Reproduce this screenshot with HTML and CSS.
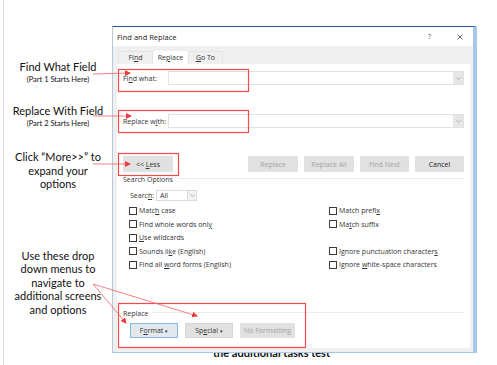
FILE: index.html
```html
<!DOCTYPE html>
<html lang="en">
<head>
    <meta charset="UTF-8">
    <meta name="viewport" content="width=device-width, initial-scale=1.0">
    <title>Find and Replace</title>
    <link rel="stylesheet" href="styles.css">
</head>
<body>
<div class="page">
    <div class="notes">
        <div class="note note-find">
            <div class="note-title">Find What Field</div>
            <div class="note-sub">(Part 1 Starts Here)</div>
        </div>
        <div class="note note-replace">
            <div class="note-title">Replace With Field</div>
            <div class="note-sub">(Part 2 Starts Here)</div>
        </div>
        <div class="note note-more">Click “More&gt;&gt;” to<br>expand your<br>options</div>
        <div class="note note-menus">Use these drop<br>down menus to<br>navigate to<br>additional screens<br>and options</div>
    </div>

    <div class="stage">
        <div class="dialog">
            <div class="titlebar">
                <span class="title">Find and Replace</span>
                <span class="help">?</span>
                <svg class="close" width="6" height="6" viewBox="0 0 6 6">
                    <path d="M0.5 0.5 L5.5 5.5 M5.5 0.5 L0.5 5.5" stroke="#555" stroke-width="0.9"/>
                </svg>
            </div>
            <div class="frame">
                <div class="tabs">
                    <div class="tab">Fi<u>n</u>d</div>
                    <div class="tab active">Re<u>p</u>lace</div>
                    <div class="tab"><u>G</u>o To</div>
                </div>
                <div class="panel">
                    <div class="field-row first">
                        <span class="field-label">Fi<u>n</u>d what:</span>
                        <div class="combo">
                            <span class="combo-btn">
                                <svg width="5" height="3" viewBox="0 0 5 3"><path d="M0.3 0.4 L2.5 2.5 L4.7 0.4" fill="none" stroke="#999" stroke-width="0.7"/></svg>
                            </span>
                        </div>
                    </div>
                    <div class="field-row second">
                        <span class="field-label">Replace w<u>i</u>th:</span>
                        <div class="combo">
                            <span class="combo-btn">
                                <svg width="5" height="3" viewBox="0 0 5 3"><path d="M0.3 0.4 L2.5 2.5 L4.7 0.4" fill="none" stroke="#999" stroke-width="0.7"/></svg>
                            </span>
                        </div>
                    </div>

                    <div class="actions">
                        <button class="btn btn-less">&lt;&lt; <u>L</u>ess</button>
                        <div class="btn-group">
                            <button class="btn btn-off">Replace</button>
                            <button class="btn btn-off">Replace All</button>
                            <button class="btn btn-off btn-narrow">Find Next</button>
                            <button class="btn btn-cancel btn-narrow">Cancel</button>
                        </div>
                    </div>

                    <div class="section section-search">
                        <span>Search Options</span>
                        <span class="section-line"></span>
                    </div>

                    <div class="search-row">
                        <span class="search-label">Searc<u>h</u>:</span>
                        <div class="select">
                            <span class="select-value">All</span>
                            <span class="select-btn">
                                <svg width="5" height="3" viewBox="0 0 5 3"><path d="M0.3 0.4 L2.5 2.5 L4.7 0.4" fill="none" stroke="#999" stroke-width="0.7"/></svg>
                            </span>
                        </div>
                    </div>

                    <div class="checks">
                        <div class="check"><span class="box"></span><span>Matc<u>h</u> case</span></div>
                        <div class="check"><span class="box"></span><span>Match prefi<u>x</u></span></div>
                        <div class="check"><span class="box"></span><span>Find whole words onl<u>y</u></span></div>
                        <div class="check"><span class="box"></span><span>Ma<u>t</u>ch suffix</span></div>
                        <div class="check"><span class="box"></span><span><u>U</u>se wildcards</span></div>
                        <div class="check"></div>
                        <div class="check"><span class="box"></span><span>Sounds li<u>k</u>e (English)</span></div>
                        <div class="check"><span class="box"></span><span>Ignore punctuation character<u>s</u></span></div>
                        <div class="check"><span class="box"></span><span>Find all <u>w</u>ord forms (English)</span></div>
                        <div class="check"><span class="box"></span><span>Ignore <u>w</u>hite-space characters</span></div>
                    </div>

                    <div class="section section-replace">
                        <span>Replace</span>
                        <span class="section-line"></span>
                    </div>

                    <div class="format-row">
                        <button class="fbtn fbtn-focus">F<u>o</u>rmat <span class="caret">▾</span></button>
                        <button class="fbtn">Sp<u>e</u>cial <span class="caret">▾</span></button>
                        <button class="fbtn fbtn-off">No Formatting</button>
                    </div>
                </div>
            </div>
        </div>
        <div class="doc-line"><span>the additional tasks test</span></div>
    </div>
</div>

<svg class="marks" width="497" height="365" viewBox="0 0 497 365">
    <defs>
        <marker id="head" markerWidth="6" markerHeight="6" refX="5" refY="3" orient="auto" markerUnits="userSpaceOnUse">
            <path d="M0 0 L6 3 L0 6 Z" fill="#ee3b3b"/>
        </marker>
    </defs>
    <g fill="none" stroke="#f04a4a" stroke-width="1.2">
        <rect x="118.5" y="69.5" width="130" height="22"/>
        <rect x="118.5" y="110.5" width="130" height="22"/>
        <rect x="118.5" y="153.5" width="60" height="22"/>
        <rect x="118.5" y="303.5" width="187" height="44"/>
    </g>
    <g stroke="#f06060" stroke-width="0.8" marker-end="url(#head)">
        <line x1="93" y1="74" x2="130" y2="73"/>
        <line x1="93" y1="116" x2="131" y2="116"/>
        <line x1="93" y1="164" x2="130" y2="164"/>
        <line x1="93" y1="284" x2="126" y2="323"/>
        <line x1="93" y1="284" x2="197" y2="316"/>
    </g>
</svg>
</body>
</html>
```

FILE: styles.css
```css
* {
    margin: 0;
    padding: 0;
    box-sizing: border-box;
}

body {
    width: 497px;
    height: 365px;
    overflow: hidden;
    position: relative;
    background: #fff;
    font-family: "Open Sans", sans-serif;
}

u {
    text-decoration: underline;
    text-underline-offset: 1px;
}

.page {
    display: flex;
    align-items: flex-start;
    height: 365px;
    padding-left: 3px;
}

/* annotations on the left */

.notes {
    width: 109px;
    height: 365px;
    border-left: 1px solid #dedede;
    font-family: Lato, sans-serif;
    font-size: 11px;
    line-height: 13.5px;
    color: #111;
    text-align: center;
}

.note-title {
    line-height: 13px;
}

.note-sub {
    font-size: 7.5px;
    line-height: 11px;
    margin-top: 1px;
}

.note-find {
    margin-top: 60px;
}

.note-replace {
    margin-top: 19px;
}

.note-more {
    margin-top: 21px;
}

.note-menus {
    margin-top: 58px;
}

/* dialog */

.stage {
    width: 365px;
    padding-top: 26px;
}

.dialog {
    height: 327px;
    display: flex;
    flex-direction: column;
    background: #f0f0f0;
    border-top: 1px solid #2b5797;
    border-left: 1px solid #b9c8d8;
    border-right: 4px solid #a6c8e6;
    border-bottom: 1px solid #a6c8e6;
}

.titlebar {
    height: 19px;
    display: flex;
    align-items: center;
    padding-left: 4px;
    padding-right: 10px;
    background: #fff;
    font-size: 7.5px;
    color: #222;
}

.help {
    margin-left: auto;
    margin-right: 26px;
    font-size: 7px;
    color: #555;
}

.frame {
    flex: 1;
    display: flex;
    flex-direction: column;
    padding: 0 3px 4px 4px;
}

.tabs {
    height: 18px;
    display: flex;
    align-items: flex-end;
    padding-left: 1px;
}

.tab {
    width: 35px;
    height: 13px;
    border: 1px solid #e4e4e4;
    border-bottom: none;
    font-size: 7px;
    line-height: 12px;
    text-align: center;
    color: #333;
}

.tab.active {
    background: #fff;
    border-color: #fff;
}

.panel {
    height: 284px;
    display: flex;
    flex-direction: column;
    background: #fff;
}

.field-row {
    height: 14px;
    display: flex;
    align-items: center;
    padding: 0 6px;
}

.field-row.first {
    margin-top: 7px;
}

.field-row.second {
    margin-top: 29px;
}

.field-label {
    width: 45px;
    font-size: 7px;
    color: #333;
}

.combo {
    flex: 1;
    height: 14px;
    display: flex;
    justify-content: flex-end;
    border: 1px solid #e2e2e2;
}

.combo-btn {
    width: 10px;
    display: flex;
    align-items: center;
    justify-content: center;
    background: #e6e6e6;
}

.actions {
    margin-top: 28px;
    display: flex;
    justify-content: space-between;
    padding: 0 6px;
}

.btn-group {
    display: flex;
    gap: 6px;
}

.btn {
    width: 50px;
    height: 16px;
    border: 1px solid #e1e1e1;
    background: #e1e1e1;
    font-family: "Open Sans", sans-serif;
    font-size: 7px;
    color: #333;
}

.btn-narrow {
    width: 49px;
}

.btn-off {
    color: #a3a3a3;
}

.btn-cancel {
    color: #222;
}

.section {
    height: 10px;
    margin-top: 2px;
    display: flex;
    align-items: center;
    gap: 4px;
    padding: 0 6px;
    font-size: 7px;
    color: #333;
}

.section-line {
    flex: 1;
    height: 1px;
    margin-top: -2px;
    background: #ededed;
}

.section-replace {
    margin-top: 37px;
}

.search-row {
    height: 11px;
    margin-top: 6px;
    display: flex;
    align-items: center;
    padding-left: 13px;
    font-size: 7px;
    color: #333;
}

.search-label {
    width: 26px;
}

.select {
    width: 41px;
    height: 11px;
    display: flex;
    border: 1px solid #dcdcdc;
}

.select-value {
    flex: 1;
    padding-left: 3px;
    line-height: 9px;
}

.select-btn {
    width: 9px;
    display: flex;
    align-items: center;
    justify-content: center;
    border-left: 1px solid #dcdcdc;
    background: #f2f2f2;
}

.checks {
    margin-top: 3px;
    display: grid;
    grid-template-columns: 200px 1fr;
    grid-auto-rows: 13.5px;
    padding-left: 12px;
}

.check {
    display: flex;
    align-items: center;
    gap: 2px;
    font-size: 7px;
    color: #333;
}

.box {
    width: 8px;
    height: 8px;
    border: 1px solid #3a3a3a;
    background: #fff;
}

.format-row {
    margin-top: 4px;
    display: flex;
    gap: 7px;
    padding-left: 13px;
}

.fbtn {
    width: 48px;
    height: 15px;
    border: 1px solid #d6d6d6;
    background: #e1e1e1;
    font-family: "Open Sans", sans-serif;
    font-size: 7px;
    color: #333;
}

.caret {
    font-size: 5px;
}

.fbtn-focus {
    border-color: #86b7e6;
    background: #e3e8ee;
}

.fbtn-off {
    width: 55px;
    border-color: #e3e3e3;
    color: #a3a3a3;
}

/* document text peeking out from under the dialog */

.doc-line {
    height: 12px;
    overflow: hidden;
    padding-left: 101px;
}

.doc-line span {
    display: block;
    margin-top: -6px;
    font-family: Lato, sans-serif;
    font-size: 11px;
    font-weight: bold;
    line-height: 11px;
    color: #111;
}

.marks {
    position: absolute;
    top: 0;
    left: 0;
    pointer-events: none;
}
```
